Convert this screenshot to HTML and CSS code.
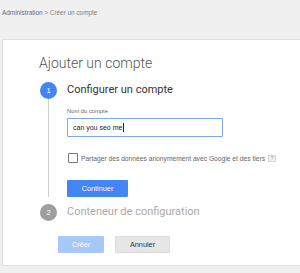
FILE: index.html
```html
<!DOCTYPE html>
<html lang="fr">
<head>
<meta charset="utf-8">
<title>Créer un compte</title>
<link rel="stylesheet" href="styles.css">
</head>
<body>
<div class="crumb"><a class="crumb-link">Administration</a> &gt; Créer un compte</div>
<div class="card">
  <h1 class="title">Ajouter un compte</h1>
  <div class="step">
    <div class="rail"><span class="num num-active">1</span><span class="line"></span></div>
    <div class="body">
      <h2 class="step-title">Configurer un compte</h2>
      <label class="field-label">Nom du compte</label>
      <div class="input"><span class="input-text">can you seo me</span><span class="caret"></span></div>
      <div class="check-row">
        <span class="checkbox"></span>
        <span class="check-label">Partager des données anonymement avec Google et des tiers</span>
        <span class="help">?</span>
      </div>
      <button class="btn btn-primary">Continuer</button>
    </div>
  </div>
  <div class="step step-next">
    <div class="rail"><span class="num num-off">2</span></div>
    <div class="body">
      <h2 class="step-title step-title-off">Conteneur de configuration</h2>
    </div>
  </div>
  <div class="actions">
    <button class="btn btn-disabled">Créer</button>
    <button class="btn btn-cancel">Annuler</button>
  </div>
</div>
</body>
</html>
```
FILE: styles.css
```css
html, body {
  margin: 0;
  padding: 0;
}
body {
  background: #f0f0f0;
  font-family: "Liberation Sans", Arial, sans-serif;
  width: 300px;
  height: 273px;
  overflow: hidden;
}
.crumb {
  box-sizing: border-box;
  height: 39px;
  padding: 9px 0 0 2px;
  font-size: 6.4px;
  line-height: 8px;
  color: #808080;
}
.crumb-link {
  color: #5c6e91;
}
.card {
  box-sizing: border-box;
  margin-left: 2px;
  height: 227px;
  background: #fff;
  border: 1px solid #e0e0e0;
  border-right: none;
  padding: 15px 0 0 36px;
}
.title {
  margin: 0;
  font-family: Roboto, sans-serif;
  font-weight: 300;
  font-size: 14px;
  line-height: 16px;
  color: #555;
}
.step {
  display: flex;
  gap: 10px;
  margin-left: 1px;
  margin-top: 11px;
}
.step-next {
  margin-top: 7px;
}
.rail {
  width: 17px;
  display: flex;
  flex-direction: column;
  align-items: center;
}
.num {
  width: 17px;
  height: 17px;
  border-radius: 50%;
  color: #fff;
  font-size: 7.5px;
  line-height: 17px;
  text-align: center;
  flex: none;
}
.num-active {
  background: #4285f4;
}
.num-off {
  background: #9e9e9e;
}
.line {
  flex: 1;
  width: 1px;
  background: #cfcfcf;
}
.body {
  display: flex;
  flex-direction: column;
  align-items: flex-start;
}
.step-title {
  margin: 0;
  font-family: Roboto, sans-serif;
  font-weight: 400;
  font-size: 11px;
  line-height: 15px;
  padding-bottom: 2px;
  color: #333;
}
.step-title-off {
  color: #aaa;
}
.field-label {
  margin-top: 8px;
  font-size: 5.8px;
  line-height: 8px;
  color: #666;
}
.input {
  box-sizing: border-box;
  margin-top: 3px;
  width: 156px;
  height: 19px;
  border: 1px solid #7fa7ec;
  border-radius: 1px;
  padding-left: 5px;
  display: flex;
  align-items: center;
}
.input-text {
  font-size: 7px;
  color: #222;
}
.caret {
  width: 1px;
  height: 9px;
  background: #222;
  margin-left: 1px;
}
.check-row {
  display: flex;
  align-items: center;
  margin-top: 16px;
  height: 10px;
}
.checkbox {
  box-sizing: border-box;
  width: 10px;
  height: 10px;
  border: 1px solid #777;
  border-radius: 1px;
  background: #fff;
  margin-left: 1px;
}
.check-label {
  margin-left: 3px;
  font-size: 6.7px;
  color: #666;
}
.help {
  box-sizing: border-box;
  margin-left: 3px;
  width: 8px;
  height: 7px;
  border: 1px solid #d6d6d6;
  background: #f2f2f2;
  color: #999;
  font-size: 5px;
  line-height: 5px;
  text-align: center;
}
.btn {
  box-sizing: border-box;
  height: 17px;
  border: none;
  border-radius: 1px;
  font-family: "Liberation Sans", Arial, sans-serif;
  font-size: 7.3px;
  padding: 0;
}
.btn-primary {
  margin-top: 17px;
  width: 61px;
  background: #4285f4;
  color: #fff;
}
.actions {
  display: flex;
  gap: 11px;
  margin-top: 15px;
  margin-left: 19px;
}
.btn-disabled {
  width: 46px;
  background: #a9c8fa;
  color: #fff;
}
.btn-cancel {
  width: 55px;
  background: #e6e6e6;
  border: 1px solid #dcdcdc;
  color: #333;
}
```
